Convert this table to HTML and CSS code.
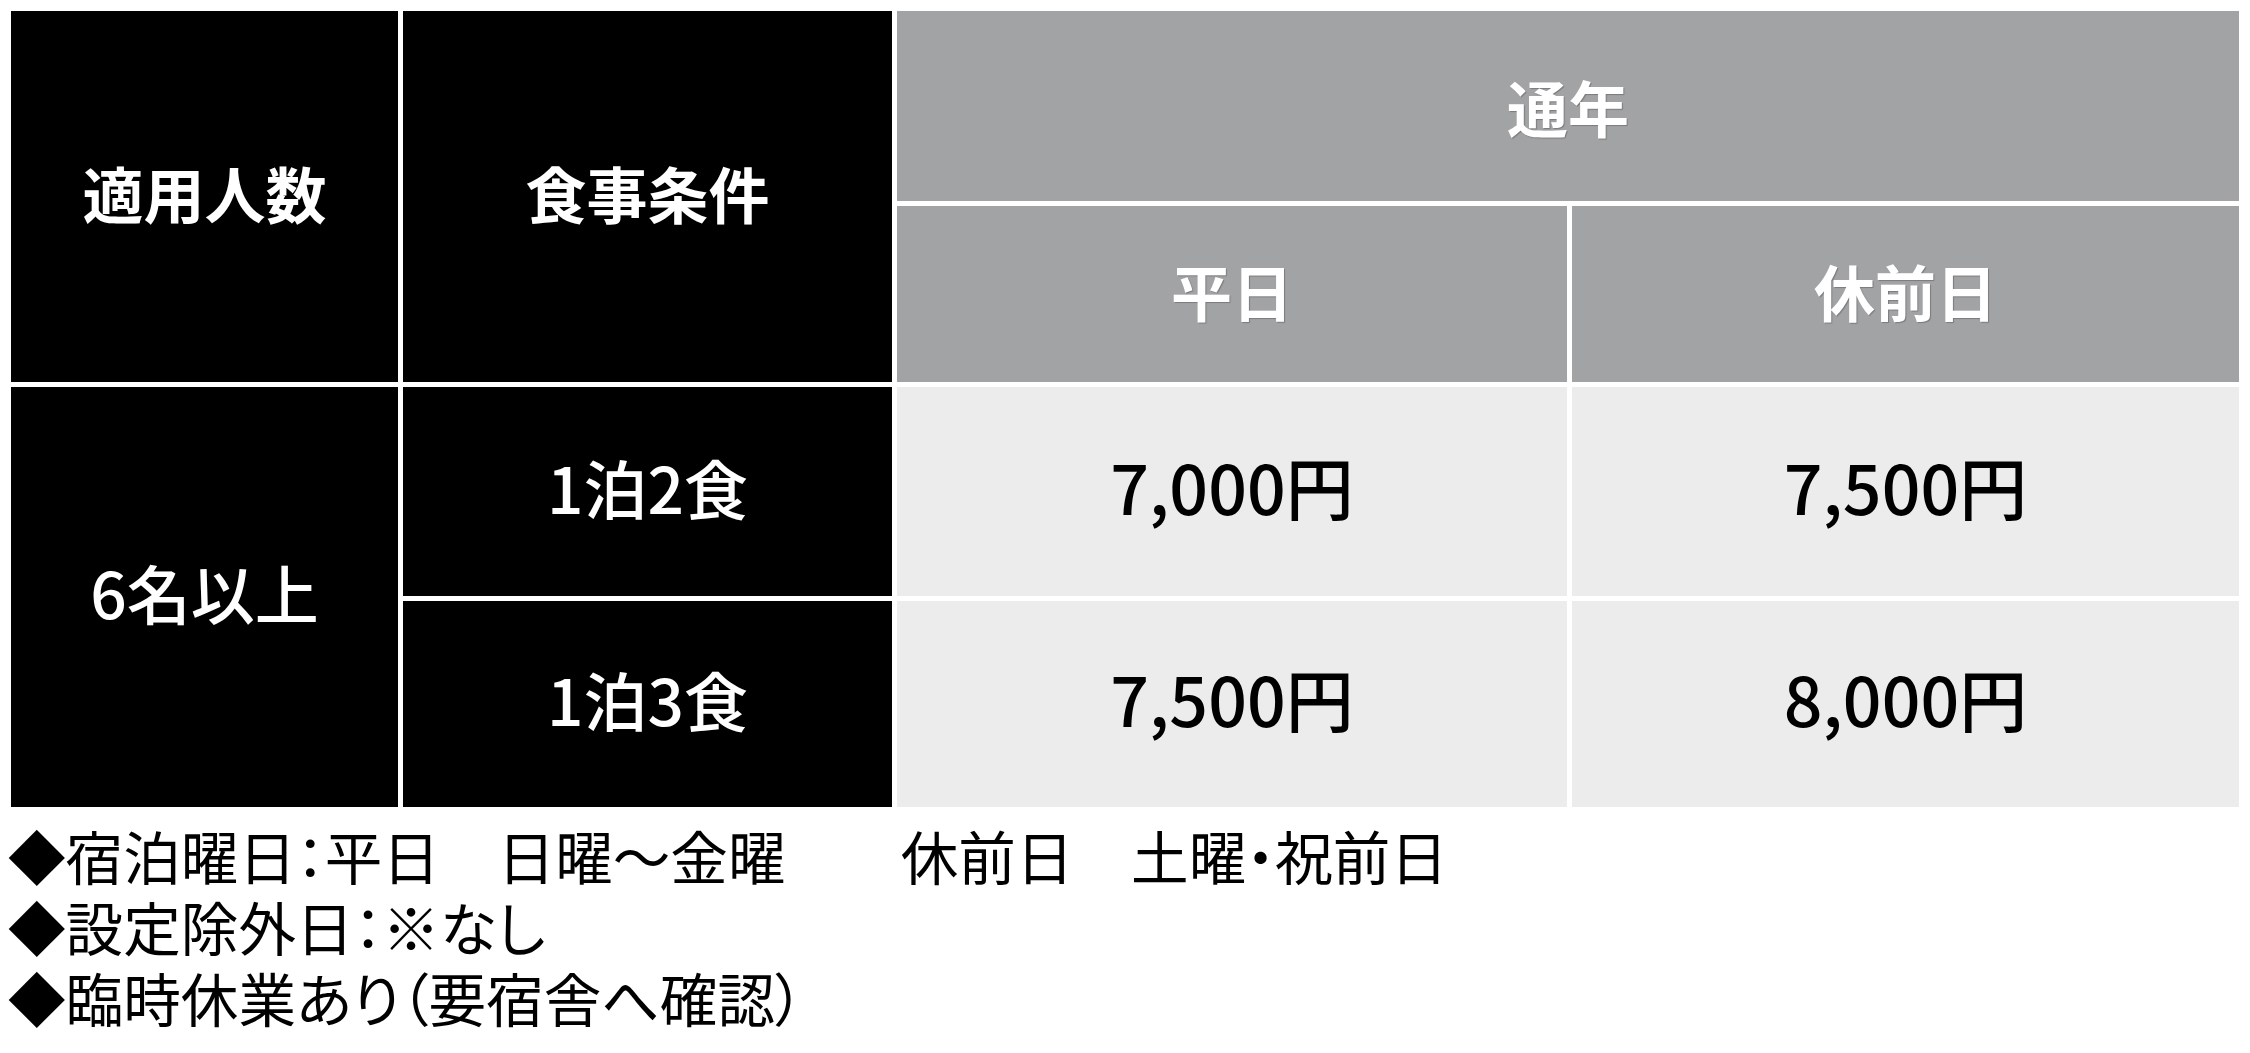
FILE: index.html
```html
<!DOCTYPE html>
<html lang="ja">
<head>
<meta charset="utf-8">
<title>料金表</title>
<link rel="stylesheet" href="styles.css">
</head>
<body>
<div class="wrap">
  <div class="rate-table">
    <div class="cell dark head c1">適用人数</div>
    <div class="cell dark head c2">食事条件</div>
    <div class="cell gray head season">通年</div>
    <div class="cell gray head">平日</div>
    <div class="cell gray head">休前日</div>

    <div class="cell dark body c1b">6名以上</div>
    <div class="cell dark body">1泊2食</div>
    <div class="cell light price">7,000円</div>
    <div class="cell light price">7,500円</div>
    <div class="cell dark body">1泊3食</div>
    <div class="cell light price">7,500円</div>
    <div class="cell light price">8,000円</div>
  </div>
  <div class="notes">
    <p>◆宿泊曜日：平日　日曜～金曜　　休前日　土曜・祝前日</p>
    <p>◆設定除外日：※なし</p>
    <p>◆臨時休業あり（要宿舎へ確認）</p>
  </div>
</div>
</body>
</html>
```
FILE: styles.css
```css
html, body {
  margin: 0;
  padding: 0;
  background: #ffffff;
}

body {
  padding: 8px;
  font-family: "Noto Sans CJK JP", "Noto Sans", sans-serif;
  color: #000000;
}

.wrap {
  width: 2234px;
}

.rate-table {
  display: grid;
  grid-template-columns: 387px 489px 670px 667px;
  grid-template-rows: 190px 176px 209px 206px;
  gap: 5px;
  padding: 3px 0 0 3px;
}

.cell {
  display: flex;
  align-items: center;
  justify-content: center;
  line-height: 1;
  white-space: nowrap;
  padding-bottom: 8px;
}

.dark {
  background: #000000;
  color: #ffffff;
}

.gray {
  background: #a2a3a5;
  color: #ffffff;
  text-shadow: 1px 1px 1px rgba(0, 0, 0, 0.25);
}

.light {
  background: #ececec;
  color: #000000;
}

.head {
  font-size: 61px;
  font-weight: 700;
}

.c1 {
  grid-column: 1;
  grid-row: 1 / span 2;
}

.c2 {
  grid-column: 2;
  grid-row: 1 / span 2;
}

.season {
  grid-column: 3 / span 2;
  grid-row: 1;
  padding-top: 0;
  padding-bottom: 0;
}

.c1b {
  grid-column: 1;
  grid-row: 3 / span 2;
}

.body {
  font-size: 64px;
  font-weight: 500;
  padding-bottom: 12px;
}

.price {
  font-size: 68px;
  font-weight: 500;
  padding-bottom: 12px;
}

.notes {
  margin-top: 13px;
  font-size: 57.6px;
  line-height: 71px;
  font-feature-settings: "palt";
}

.notes p {
  margin: 0;
  white-space: pre;
}
```
